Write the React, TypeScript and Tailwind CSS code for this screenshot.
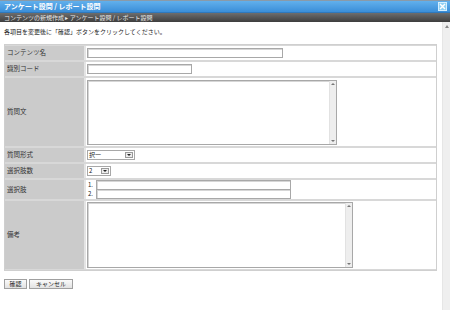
import React from "react";

const font = { fontFamily: '"Noto Sans CJK JP", "Noto Sans", sans-serif' };

function TextBox({ w }: { w: string }) {
  return <div className={`${w} h-[10px] border border-[#a8a8a8] bg-white shadow-[inset_1px_1px_0_#d6d6d6]`} />;
}

function ScrollArea({ w, h }: { w: string; h: string }) {
  return (
    <div className={`${w} ${h} flex border border-[#a8a8a8] bg-white shadow-[inset_1px_1px_0_#d6d6d6]`}>
      <div className="flex-1" />
      <div className="w-[7px] flex flex-col justify-between bg-[#eeeeee] border-l border-[#e2e2e2] py-[2px] items-center">
        <div className="w-0 h-0 border-x-[2px] border-x-transparent border-b-[2px] border-b-[#777]" />
        <div className="w-0 h-0 border-x-[2px] border-x-transparent border-t-[2px] border-t-[#777]" />
      </div>
    </div>
  );
}

function Select({ w, value }: { w: string; value: string }) {
  return (
    <div className={`${w} h-[10px] flex border border-[#a8a8a8] bg-white`}>
      <div className="flex-1 text-[6px] leading-[8px] pl-[1px] text-[#222]">{value}</div>
      <div className="w-[8px] m-[1px] bg-[#ececec] border border-[#9a9a9a] flex items-center justify-center">
        <div className="w-0 h-0 border-x-[2px] border-x-transparent border-t-[2px] border-t-[#222]" />
      </div>
    </div>
  );
}

function Row({ label, h, children }: { label: string; h: string; children: React.ReactNode }) {
  return (
    <div className={`flex ${h}`}>
      <div className="w-[79px] bg-[#cbcbcb] flex items-center pl-[2px] text-[6.5px] text-[#333]">{label}</div>
      <div className="flex-1 bg-white border-l-2 border-[#e4e4e4] pl-[1px] flex items-center">{children}</div>
    </div>
  );
}

export default function App() {
  return (
    <div className="w-[450px] h-[310px] bg-white flex flex-col overflow-hidden" style={font}>
      {/* title bar */}
      <div className="h-[13px] flex items-center bg-gradient-to-b from-[#62b0ec] to-[#3a8ed8] border-t border-[#8a9aa8] border-b border-b-[#2f78bb]">
        <div className="flex-1 pl-[4px] text-[7px] font-bold text-white leading-none">アンケート設問 / レポート設問</div>
        <div className="w-[9px] h-[9px] mr-[3px] bg-[#8fd0f3] border border-[#d6efff] flex items-center justify-center">
          <svg width="7" height="7" viewBox="0 0 7 7">
            <path d="M1 1L6 6M6 1L1 6" stroke="#ffffff" strokeWidth="1.4" />
          </svg>
        </div>
      </div>
      {/* breadcrumb */}
      <div className="h-[9px] flex items-center bg-gradient-to-b from-[#6e6e6e] to-[#3e3e3e] pl-[4px] text-[6px] text-[#e8e8e8] leading-none">
        コンテンツの新規作成 ▸ アンケート設問 / レポート設問
      </div>
      <div className="flex-1 flex">
        <div className="flex-1 pl-[4px] pr-[5px] pt-[6px]">
          <div className="text-[6px] leading-[8px] text-[#222]">各項目を変更後に「確認」ボタンをクリックしてください。</div>
          <div className="mt-[8px] bg-[#d8d8d8] border border-[#cfcfcf] flex flex-col gap-[2px] pt-[1px] pb-[1px]">
            <Row label="コンテンツ名" h="h-[14px]">
              <TextBox w="w-[196px]" />
            </Row>
            <Row label="識別コード" h="h-[14px]">
              <TextBox w="w-[105px]" />
            </Row>
            <Row label="質問文" h="h-[68px]">
              <ScrollArea w="w-[250px]" h="h-[65px]" />
            </Row>
            <Row label="質問形式" h="h-[14px]">
              <Select w="w-[48px]" value="択一" />
            </Row>
            <Row label="選択肢数" h="h-[14px]">
              <Select w="w-[24px]" value="2" />
            </Row>
            <Row label="選択肢" h="h-[19px]">
              <div className="flex flex-col">
                {["1.", "2."].map((n) => (
                  <div key={n} className="flex items-center h-[9.5px]">
                    <span className="w-[9px] text-[6px] leading-none text-[#222] pl-[1px]">{n}</span>
                    <TextBox w="w-[195px]" />
                  </div>
                ))}
              </div>
            </Row>
            <Row label="備考" h="h-[68px]">
              <ScrollArea w="w-[266px]" h="h-[66px]" />
            </Row>
          </div>
          <div className="mt-[8px] flex gap-[2px]">
            <button className="w-[23px] h-[10px] text-[6px] leading-none text-[#222] bg-gradient-to-b from-[#fafafa] to-[#e2e2e2] border border-[#a0a0a0]">確認</button>
            <button className="w-[44px] h-[10px] text-[6px] leading-none text-[#222] bg-gradient-to-b from-[#fafafa] to-[#e2e2e2] border border-[#a0a0a0]">キャンセル</button>
          </div>
        </div>
        {/* scrollbar */}
        <div className="w-[8px] bg-[#efefef] border-l border-[#e6e6e6] flex flex-col items-center pt-[3px]">
          <div className="w-0 h-0 border-x-[2px] border-x-transparent border-b-[3px] border-b-[#888]" />
        </div>
      </div>
    </div>
  );
}
